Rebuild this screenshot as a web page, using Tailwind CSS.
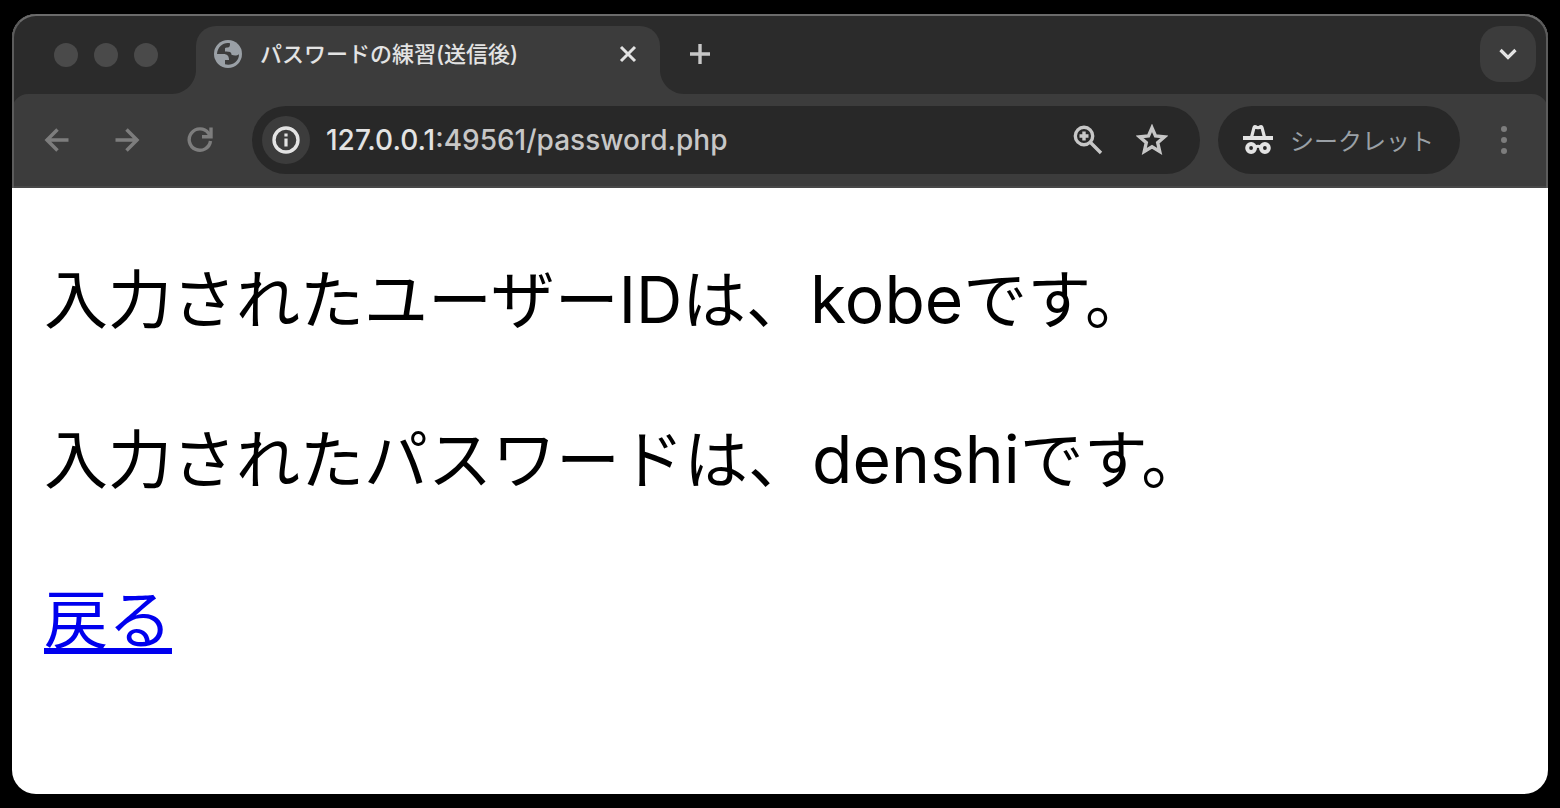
<!DOCTYPE html>
<html lang="ja">
<head>
<meta charset="utf-8">
<meta name="viewport" content="width=device-width, initial-scale=1">
<title>パスワードの練習(送信後)</title>
<script src="https://cdn.jsdelivr.net/npm/@tailwindcss/browser@4"></script>
</head>
<body class="min-h-screen bg-black flex flex-col px-3 py-[14px] font-['Inter','Noto_Sans_CJK_JP',sans-serif]">
<div class="relative grow flex flex-col rounded-3xl overflow-hidden bg-white">
  <header class="relative bg-[#2b2b2b]">
    <div class="flex items-start h-20 pt-3 pr-3">
      <div class="flex gap-4 pl-[42px] pt-[17px] w-40 shrink-0">
        <span class="size-6 rounded-full bg-[#4a4a4a]"></span>
        <span class="size-6 rounded-full bg-[#4a4a4a]"></span>
        <span class="size-6 rounded-full bg-[#4a4a4a]"></span>
      </div>
      <svg class="w-6 h-[68px] shrink-0 fill-[#3c3c3c]" viewBox="0 0 24 68"><path d="M24 44v24H0c13 0 24-11 24-24z"/></svg>
      <div class="flex items-center h-[68px] w-[464px] shrink-0 bg-[#3c3c3c] rounded-t-[20px] pl-[18px] pr-[22px] pb-3">
        <svg class="size-7 shrink-0" viewBox="0 0 28 28"><circle cx="14" cy="14" r="14" fill="#9aa0a6"/><path fill="#3c3c3c" d="M16 3.200C10 1.800 3.600 6 3 14H9.500C13 14 15.200 16 15 20H11V24.200C17 26 25 22.500 25 14.200C23 15.800 20 15.600 17.500 14.800C17.500 12 16 11.400 11 11.400V8.600C11 7.600 12 7.400 14 7.400C15.800 7.400 16 5.500 16 3.200Z"/></svg>
        <span class="ml-[18px] grow text-[22px] leading-7 pb-px font-medium text-[#e3e3e3] whitespace-nowrap">パスワードの練習(送信後)</span>
        <button type="button" aria-label="タブを閉じる" class="size-5 shrink-0"><svg viewBox="0 0 20 20" fill="none" stroke="#e3e3e3" stroke-width="3"><path d="M3 3l14 14M17 3L3 17"/></svg></button>
      </div>
      <svg class="w-6 h-[68px] shrink-0 fill-[#3c3c3c]" viewBox="0 0 24 68"><path d="M0 44v24h24C11 68 0 57 0 44z"/></svg>
      <button type="button" aria-label="新しいタブ" class="mt-[18px] ml-1.5 size-5 shrink-0"><svg viewBox="0 0 20 20" stroke="#c7c7c7" stroke-width="3.400"><path d="M10 0v20M0 10h20"/></svg></button>
      <button type="button" aria-label="タブを検索" class="ml-auto size-14 shrink-0 rounded-[20px] bg-[#3c3c3c] flex items-center justify-center"><svg class="size-5" viewBox="0 0 20 20" fill="none" stroke="#e3e3e3" stroke-width="3.200"><path d="M2.500 6l7.500 7.500L17.500 6"/></svg></button>
    </div>
    <div class="flex items-center h-[94px] bg-[#3c3c3c] rounded-t-2xl border-b-2 border-[#484848] pl-7">
      <button type="button" aria-label="戻る" class="size-8 shrink-0"><svg viewBox="0 0 32 32" fill="none" stroke="#7d7d7d" stroke-width="3.500"><path d="M17.500 5.500L7 16l10.500 10.500M6 16h22.500"/></svg></button>
      <button type="button" aria-label="進む" class="size-8 shrink-0 ml-10"><svg viewBox="0 0 32 32" fill="none" stroke="#7d7d7d" stroke-width="3.500"><path d="M14.500 5.500L25 16 14.500 26.500M26 16H3.500"/></svg></button>
      <button type="button" aria-label="再読み込み" class="size-8 shrink-0 ml-10"><svg viewBox="0 0 32 32" fill="none" stroke="#7d7d7d" stroke-width="3.400"><path d="M26.500 17A10.700 10.700 0 1 1 24.500 9.200L26.500 12"/><path d="M27 3.500v9.200H18"/></svg></button>
      <div class="ml-9 h-[68px] grow rounded-full bg-[#282828] flex items-center pl-2.5 pr-8">
        <button type="button" aria-label="サイト情報" class="size-12 shrink-0 rounded-full bg-[#3c3c3c] flex items-center justify-center"><svg class="size-7" viewBox="0 0 28 28"><circle cx="14" cy="14" r="12" fill="none" stroke="#e3e3e3" stroke-width="3.400"/><path fill="#e3e3e3" d="M12.400 12.500h3.200v8h-3.200zM12.400 7.500h3.200v3h-3.200z"/></svg></button>
        <a href="#" class="ml-4 grow text-[28px] leading-9 font-medium text-[#c7c7c7] whitespace-nowrap"><span class="text-[#e3e3e3]">127.0.0.1</span>:49561/password.php</a>
        <button type="button" aria-label="ズーム" class="size-8 shrink-0"><svg viewBox="0 0 32 32" fill="none" stroke="#c7c7c7" stroke-width="3.400"><circle cx="12" cy="12" r="8.700"/><path d="M18 18l11 11M12 7.500v9M7.500 12h9"/></svg></button>
        <button type="button" aria-label="ブックマーク" class="size-8 shrink-0 ml-8"><svg viewBox="0 0 32 32" fill="none" stroke="#c7c7c7" stroke-width="3.400"><path d="M16 3.800l3.500 8.200 8.900.8-6.700 5.900 2 8.700L16 22.800l-7.700 4.600 2-8.700-6.700-5.900 8.900-.8z"/></svg></button>
      </div>
      <button type="button" class="ml-[18px] h-[68px] shrink-0 rounded-full bg-[#282828] flex items-center pl-6 pr-[26px] gap-4">
        <svg class="size-8" viewBox="0 0 32 32" fill="none" stroke="#e3e3e3"><path fill="#e3e3e3" stroke="none" d="M1 12h30v4H1z"/><path stroke-width="3.200" d="M9.300 14L12 3.600q.4-1.400 1.600-.8l1.600.8h1.600l1.600-.8q1.200-.6 1.600.8l2.700 10.400"/><circle cx="9.100" cy="24" r="3.900" stroke-width="4"/><circle cx="22.900" cy="24" r="3.900" stroke-width="4"/><path stroke-width="3" d="M13 23q3-1.600 6 0"/></svg>
        <span class="text-2xl text-[#9aa0a6] font-['Noto_Sans_CJK_JP',sans-serif] whitespace-nowrap">シークレット</span>
      </button>
      <button type="button" aria-label="メニュー" class="ml-7 mr-7 size-8 shrink-0"><svg viewBox="0 0 32 32" fill="#7d7d7d"><circle cx="16" cy="5" r="3"/><circle cx="16" cy="16" r="3"/><circle cx="16" cy="27" r="3"/></svg></button>
    </div>
    <div class="absolute inset-0 rounded-t-3xl border-2 border-b-0 border-[#6b6b6b] border-x-[#5c5c5c] pointer-events-none"></div>
  </header>
  <main class="px-8 pt-16 text-[64px] leading-[96px] text-black">
    <p class="mb-16">入力されたユーザーIDは、<span class="text-[66px] leading-none">kobe</span>です。</p>
    <p class="mb-16">入力されたパスワードは、<span class="text-[66px] leading-none">denshi</span>です。</p>
    <p><a href="#" class="text-[#0000ee] underline decoration-[6px] underline-offset-[5px]">戻る</a></p>
  </main>
</div>
</body>
</html>
